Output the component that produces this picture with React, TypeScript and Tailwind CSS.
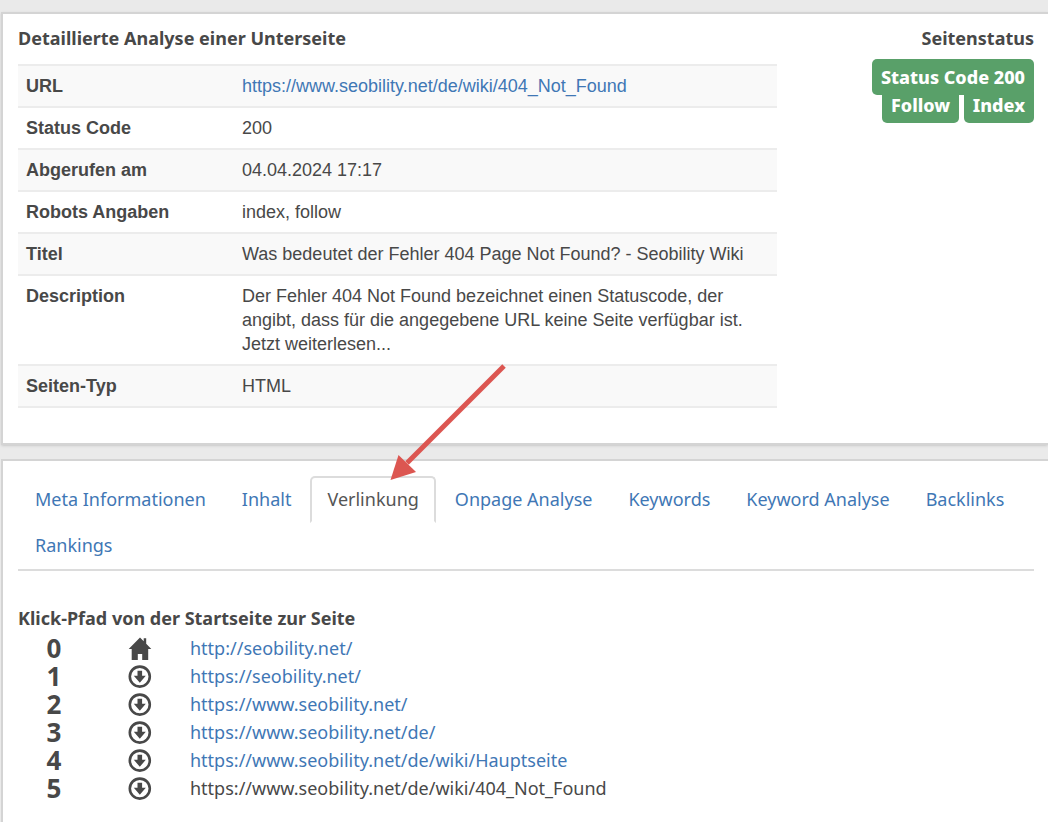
const details = [
  { label: 'URL', value: 'https://www.seobility.net/de/wiki/404_Not_Found', link: true },
  { label: 'Status Code', value: '200' },
  { label: 'Abgerufen am', value: '04.04.2024 17:17' },
  { label: 'Robots Angaben', value: 'index, follow' },
  { label: 'Titel', value: 'Was bedeutet der Fehler 404 Page Not Found? - Seobility Wiki' },
  {
    label: 'Description',
    value:
      'Der Fehler 404 Not Found bezeichnet einen Statuscode, der angibt, dass für die angegebene URL keine Seite verfügbar ist. Jetzt weiterlesen...',
  },
  { label: 'Seiten-Typ', value: 'HTML' },
];

const tabs = [
  'Meta Informationen',
  'Inhalt',
  'Verlinkung',
  'Onpage Analyse',
  'Keywords',
  'Keyword Analyse',
  'Backlinks',
  'Rankings',
];

const clickPath = [
  'http://seobility.net/',
  'https://seobility.net/',
  'https://www.seobility.net/',
  'https://www.seobility.net/de/',
  'https://www.seobility.net/de/wiki/Hauptseite',
  'https://www.seobility.net/de/wiki/404_Not_Found',
];

function HomeIcon() {
  return (
    <svg className="w-6 h-6" viewBox="0 0 24 24" fill="currentColor" aria-hidden="true">
      <path d="M12 1.5L0.7 13H3.7V24H9.8V18H14.2V24H20.2V13H23.3L18.2 7.8V2.3H15.7V5.3Z" />
    </svg>
  );
}

function DownIcon() {
  return (
    <svg className="w-6 h-6" viewBox="0 0 24 24" fill="currentColor" aria-hidden="true">
      <circle cx="11.8" cy="12.6" r="10" fill="none" stroke="currentColor" strokeWidth="2.6" />
      <path d="M9.5 6.8H14.1V11.8H17.8L11.8 18.8L5.8 11.8H9.5Z" />
    </svg>
  );
}

function Arrow() {
  return (
    <svg
      className="absolute left-20 bottom-11 w-[116px] h-[116px] overflow-visible pointer-events-none text-[#dc5651]"
      viewBox="0 0 116 116"
      aria-hidden="true"
    >
      <path d="M114 3L17 100" stroke="currentColor" strokeWidth="5" />
      <path d="M0.5 117L8.5 92L26 109Z" fill="currentColor" />
    </svg>
  );
}

function Badge({ children }: { children: string }) {
  return (
    <span className="rounded-[5px] bg-[#59a069] px-[9px] py-[6px] font-extrabold text-white">{children}</span>
  );
}

export default function App() {
  return (
    <div className="flex min-h-screen flex-col bg-[#eaeaea] pt-3 pl-px font-['Noto_Sans',sans-serif] text-[18px] leading-6 text-[#484848]">
      <section className="mb-[14px] grid grid-cols-[3fr_1fr] gap-1 border-2 border-r-0 border-[#d4d4d4] bg-white pt-3 pr-[14px] pb-[35px] pl-[15px] shadow-sm">
        <div>
          <h2 className="mb-[14px] font-bold">Detaillierte Analyse einer Unterseite</h2>
          <table className="w-full table-fixed border-collapse border-b-2 border-[#ececec] font-['Liberation_Sans',Arial,sans-serif]">
            <tbody>
              {details.map((row) => (
                <tr key={row.label} className="border-t-2 border-[#ececec] odd:bg-[#f9f9f9]">
                  <th scope="row" className="w-[216px] p-2 text-left align-top font-bold">
                    {row.label}
                  </th>
                  <td className="p-2 align-top">
                    {row.link ? (
                      <a href="#" className="text-[#3f77b5]">
                        {row.value}
                      </a>
                    ) : (
                      row.value
                    )}
                  </td>
                </tr>
              ))}
            </tbody>
          </table>
        </div>
        <div className="text-right">
          <h2 className="mb-[13px] font-bold">Seitenstatus</h2>
          <p className="leading-7">
            <Badge>Status Code 200</Badge>
            <br />
            <Badge>Follow</Badge> <Badge>Index</Badge>
          </p>
        </div>
      </section>

      <section className="flex-1 border-2 border-r-0 border-b-0 border-[#d4d4d4] bg-white pt-[15px] pr-[14px] pl-[15px]">
        <nav className="mb-[35px]">
          <ul className="flex flex-wrap gap-x-[2px] border-b-2 border-[#dcdcdc] pb-px">
            {tabs.map((tab) => {
              const active = tab === 'Verlinkung';
              return (
                <li key={tab} className="relative -mb-px">
                  <a
                    href="#"
                    className={
                      active
                        ? 'block rounded-t-[5px] border-2 border-[#dcdcdc] border-b-white px-[15px] pt-[9px] pb-[10px] text-[#555]'
                        : 'block border-2 border-transparent px-[15px] pt-[9px] pb-[10px] text-[#3f77b5]'
                    }
                  >
                    {tab}
                  </a>
                  {active && <Arrow />}
                </li>
              );
            })}
          </ul>
        </nav>

        <h2 className="mb-1 font-bold">Klick-Pfad von der Startseite zur Seite</h2>
        <ol>
          {clickPath.map((url, i) => (
            <li key={url} className="grid h-7 grid-cols-[72px_100px_1fr] items-center">
              <span className="text-center text-[26px] leading-7 font-bold">{i}</span>
              <span className="flex justify-center">{i === 0 ? <HomeIcon /> : <DownIcon />}</span>
              {i < clickPath.length - 1 ? (
                <a href="#" className="text-[#3f77b5]">
                  {url}
                </a>
              ) : (
                <span>{url}</span>
              )}
            </li>
          ))}
        </ol>
      </section>
    </div>
  );
}
